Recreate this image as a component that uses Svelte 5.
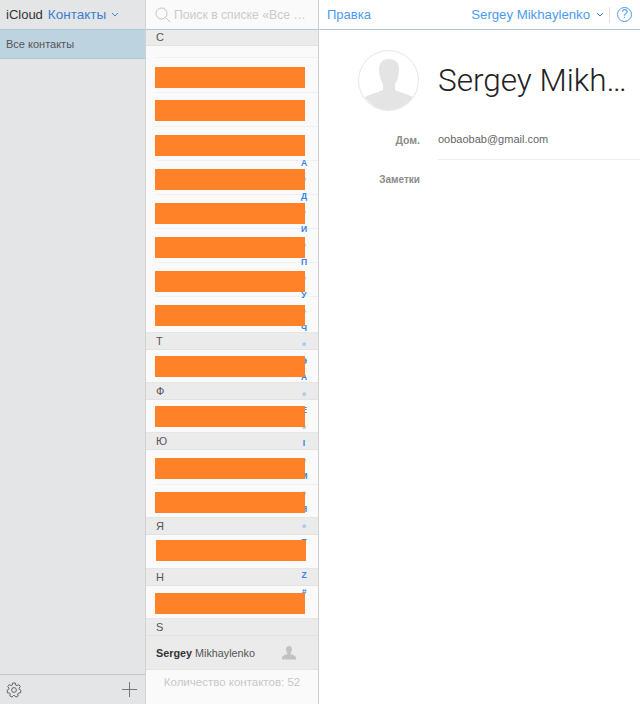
<script>
  // padding above and below each redaction bar in a row
  const sections = [
    { letter: 'С', spacer: true, rows: [[9, 4], [7, 5], [8, 4], [8, 4], [8, 4], [8, 4], [8, 4], [8, 6]] },
    { letter: 'T', rows: [[6, 5]] },
    { letter: 'Ф', rows: [[6, 5]] },
    { letter: 'Ю', rows: [[8, 5], [7, 4]] },
    { letter: 'Я', shift: true, rows: [[5, 7]] },
    { letter: 'H', rows: [[7, 4]] }
  ];

  const index = ['А', '•', 'Д', '•', 'И', '•', 'П', '•', 'У', '•', 'Ч', '•', 'Э', 'A', '•', 'E', '•', 'I', '•', 'M', '•', 'Я', '•', 'T', '•', 'Z', '#'];
</script>

<div class="page">
  <aside class="groups">
    <header class="groups-head">
      <span class="brand">iCloud</span>
      <span class="app">Контакты</span>
      <svg class="chev" viewBox="0 0 8 5" width="8" height="5"><path d="M1 1l3 3 3-3" /></svg>
    </header>
    <div class="group on">Все контакты</div>
    <footer class="groups-foot">
      <svg viewBox="0 0 16 16" width="16" height="16" class="gear">
        <path d="M6.700 1h2.600l.4 2 1.200.6 1.800-1 1.600 2-1.300 1.500.3 1.300 1.700.9-.5 2.600-2 .1-.8 1 .5 2-2.300 1.100-1.300-1.600H7.400l-1.300 1.600-2.300-1.100.5-2-.8-1-2-.1-.5-2.600 1.700-.9.3-1.300L1.700 4.600l1.600-2 1.800 1 1.200-.6z" />
        <circle cx="8" cy="8" r="2.400" />
      </svg>
      <svg viewBox="0 0 15 15" width="15" height="15" class="plus"><path d="M7.500 0v15M0 7.500h15" /></svg>
    </footer>
  </aside>

  <section class="list">
    <header class="search">
      <svg viewBox="0 0 16 16" width="16" height="16"><circle cx="6.500" cy="6.500" r="5.500" /><path d="M10.500 10.500l4.500 4.500" /></svg>
      <span>Поиск в списке «Все …</span>
    </header>
    <div class="scroll">
      <div class="index">
        {#each index as ch}
          <span class:dot={ch === '•'}>{ch}</span>
        {/each}
      </div>
      {#each sections as s}
        <div class="letter" class:first={s.spacer}>{s.letter}</div>
        {#if s.spacer}
          <div class="spacer"></div>
        {/if}
        {#each s.rows as r, i}
          <div class="row" class:last={i === s.rows.length - 1} style="padding-top: {r[0]}px; padding-bottom: {r[1]}px">
            <div class="bar" class:shift={s.shift}></div>
          </div>
        {/each}
      {/each}
      <div class="letter">S</div>
      <div class="me">
        <span><b>Sergey</b> Mikhaylenko</span>
        <svg viewBox="0 0 14 14" width="14" height="14"><path d="M7 0c2 0 3 1.400 3 3.300 0 1.500-.6 2.800-1.300 3.500v1.500C11 9 14 9.600 14 12v1.500H0V12c0-2.400 3-3 5.300-3.700V6.800C4.600 6.100 4 4.800 4 3.300 4 1.400 5 0 7 0z" /></svg>
      </div>
      <div class="count">Количество контактов: 52</div>
    </div>
  </section>

  <main class="card">
    <header class="card-head">
      <span class="edit">Правка</span>
      <span class="user">Sergey Mikhaylenko</span>
      <svg class="chev" viewBox="0 0 8 5" width="8" height="5"><path d="M1 1l3 3 3-3" /></svg>
      <i class="sep"></i>
      <span class="help">?</span>
    </header>
    <div class="hero">
      <div class="avatar">
        <svg viewBox="0 0 60 60" width="60" height="60">
          <path d="M30 8c7 0 10 4 10 11 0 6-2 11-4 14v6c3 2 13 4 18 7-5 8-14 14-24 14S11 54 6 46c5-3 15-5 18-7v-6c-2-3-4-8-4-14 0-7 3-11 10-11z" />
        </svg>
      </div>
      <h1>Sergey Mikh…</h1>
    </div>
    <div class="field">
      <span class="label">Дом.</span>
      <span class="value">oobaobab@gmail.com</span>
    </div>
    <div class="field notes">
      <span class="label">Заметки</span>
    </div>
  </main>
</div>

<style>
  :global(body) {
    margin: 0;
    overflow: hidden;
  }

  .page {
    display: flex;
    width: 640px;
    height: 704px;
    overflow: hidden;
    font-family: "Liberation Sans", Arial, sans-serif;
    background: #fff;
  }

  /* left column */
  .groups {
    width: 145px;
    display: flex;
    flex-direction: column;
    background: #e4e5e7;
    border-right: 1px solid #d0d2d4;
    flex: none;
  }

  .groups-head {
    display: flex;
    align-items: center;
    padding-left: 6px;
    box-sizing: border-box;
    border-bottom: 1px solid #aec6d8;
    height: 30px;
    font-size: 13px;
  }

  .brand {
    color: #333;
    margin-right: 5px;
  }

  .app {
    color: #3a7fcc;
    margin-right: 5px;
    font-size: 13.500px;
  }

  .chev {
    fill: none;
    stroke: #3a86d8;
    stroke-width: 1;
  }

  .group {
    height: 28px;
    line-height: 28px;
    padding-left: 6px;
    font-size: 11px;
    color: #555;
    background: #bdd3e0;
    border-bottom: 1px solid #aec6d8;
  }

  .groups-foot {
    margin-top: auto;
    height: 29px;
    border-top: 1px solid #c4c6c8;
    display: flex;
    align-items: center;
    justify-content: space-between;
    padding: 0 8px 0 6px;
  }

  .gear {
    fill: none;
    stroke: #666;
    stroke-width: 1;
  }

  .plus {
    fill: none;
    stroke: #777;
    stroke-width: 1;
  }

  /* middle column */
  .list {
    width: 172px;
    flex: none;
    display: flex;
    flex-direction: column;
    background: #fafafa;
    border-right: 1px solid #cfcfcf;
  }

  .search {
    height: 30px;
    box-sizing: border-box;
    display: flex;
    align-items: center;
    gap: 3px;
    padding-left: 9px;
    border-bottom: 1px solid #aec6d8;
    font-size: 12.200px;
    color: #cbcbcb;
    white-space: nowrap;
  }

  .search svg {
    fill: none;
    stroke: #c4c4c4;
    stroke-width: 1;
  }

  .scroll {
    position: relative;
    flex: 1;
    overflow: hidden;
  }

  .letter {
    height: 16px;
    line-height: 16px;
    padding-left: 10px;
    font-size: 11px;
    color: #555;
    background: #ebebeb;
    border-bottom: 1px solid #e2e2e2;
  }

  .letter.first {
    height: 15px;
    line-height: 15px;
  }

  .row {
    margin-left: 9px;
    border-bottom: 1px solid #f0f0f0;
  }

  .row.last {
    margin-left: 0;
    padding-left: 9px;
    border-bottom-color: #e6e6e6;
  }

  .spacer {
    height: 11px;
    margin-left: 10px;
    border-bottom: 1px solid #f0f0f0;
  }

  .bar {
    position: relative;
    z-index: 2;
    height: 21px;
    width: 150px;
    background: #ff8128;
  }

  .bar.shift {
    margin-left: 1px;
  }

  .index {
    position: absolute;
    z-index: 1;
    right: 6px;
    top: 124.500px;
    width: 16px;
    display: flex;
    flex-direction: column;
    align-items: center;
    color: #2f86ea;
    font-size: 8.500px;
    font-weight: bold;
  }

  .index span {
    height: 16.500px;
    line-height: 16.500px;
  }

  .index .dot {
    color: #a9cdf5;
    font-size: 13px;
  }

  .me {
    height: 33px;
    display: flex;
    align-items: center;
    justify-content: space-between;
    padding: 0 22px 0 10px;
    background: #ebebeb;
    font-size: 10.800px;
    color: #555;
    border-bottom: 1px solid #e4e4e4;
  }

  .me b {
    color: #333;
  }

  .me svg {
    fill: #c2c2c2;
  }

  .count {
    text-align: center;
    font-size: 11.500px;
    color: #c8c8c8;
    padding-top: 6px;
  }

  /* right column */
  .card {
    flex: 1;
    min-width: 0;
  }

  .card-head {
    height: 30px;
    box-sizing: border-box;
    display: flex;
    align-items: center;
    padding: 0 8px;
    border-bottom: 1px solid #aec6d8;
    color: #4a9bf0;
    font-size: 13px;
  }

  .user {
    margin-left: auto;
    margin-right: 6px;
    font-size: 13.200px;
  }

  .sep {
    width: 1px;
    height: 16px;
    background: #e2e2e2;
    margin: 0 7px 0 5px;
  }

  .help {
    width: 13px;
    height: 13px;
    line-height: 13px;
    font-size: 12px;
    text-align: center;
    border: 1px solid #4a9bf0;
    border-radius: 50%;
  }

  .hero {
    display: flex;
    align-items: center;
    padding: 20px 0 0 39px;
    gap: 19px;
  }

  .avatar {
    width: 61px;
    height: 61px;
    border: 1px solid #e6e6e6;
    border-radius: 50%;
    overflow: hidden;
    flex: none;
    box-sizing: border-box;
  }

  .avatar svg {
    display: block;
    fill: #e4e4e4;
  }

  h1 {
    margin: 0;
    font-family: Roboto, "Liberation Sans", sans-serif;
    font-size: 31.500px;
    font-weight: 300;
    color: #222;
    white-space: nowrap;
  }

  .field {
    display: flex;
    align-items: center;
    gap: 18px;
    height: 39px;
    margin-top: 9px;
    font-size: 11px;
  }

  .label {
    width: 101px;
    text-align: right;
    color: #8c8c8c;
    font-weight: bold;
    flex: none;
    font-size: 10.500px;
  }

  .value {
    flex: 1;
    color: #666;
    height: 100%;
    line-height: 39px;
    border-bottom: 1px solid #eee;
  }

  .notes {
    margin-top: 1px;
  }

  .notes .label {
    font-size: 10px;
  }
</style>
